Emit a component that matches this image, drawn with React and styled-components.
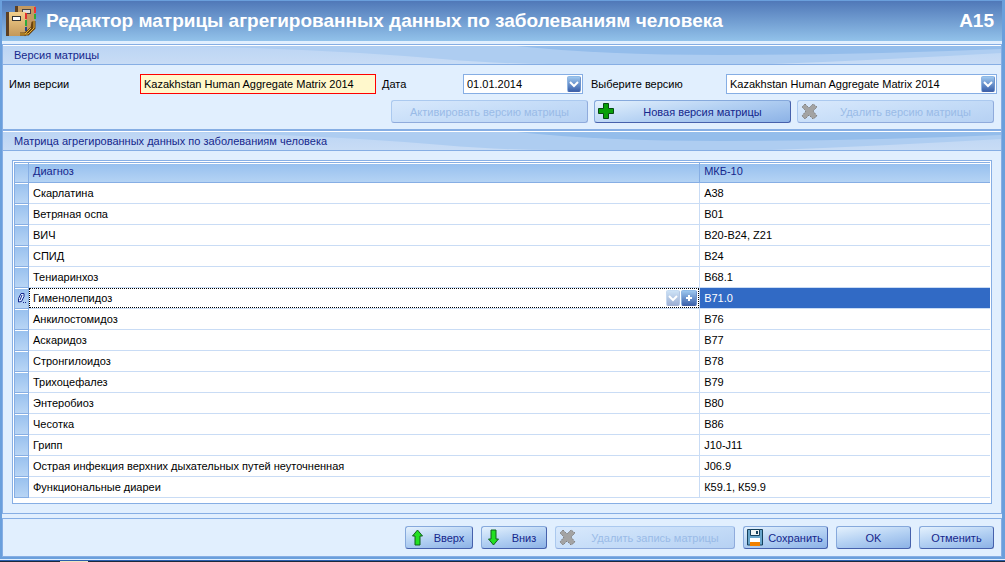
import React from 'react';
import styled, { createGlobalStyle, css } from 'styled-components';

const Global = createGlobalStyle`
  * { box-sizing: border-box; }
  body {
    margin: 0;
    background: #e1effe;
    font-family: "Liberation Sans", Arial, sans-serif;
    font-size: 11px;
    line-height: 14px;
    color: #000;
  }
  button, input, select { font: inherit; color: inherit; }
`;

const Screen = styled.div`
  min-height: 100vh;
  display: flex;
  flex-direction: column;
`;

const Window = styled.main`
  flex: 1;
  display: flex;
  flex-direction: column;
  background: #e1effe;
  border: 2px solid #6a9fdc;
  border-top-width: 1px;
  border-right-width: 3px;
`;

const Desktop = styled.div`
  height: 3px;
  padding-left: 60px;
  background: linear-gradient(#e1effe 1px, #2b5fae 1px 2px, #1c2a3c 2px);
`;

const DesktopItem = styled.div`
  width: 28px;
  height: 3px;
  border-bottom: 1px solid #ece4c0;
`;

const TitleBar = styled.header`
  height: 40px;
  flex: none;
  display: flex;
  align-items: center;
  gap: 10px;
  padding: 0 8px 0 4px;
  margin-bottom: 3px;
  background: linear-gradient(#5078b8, #92c2ea);
  color: #fff;
`;

const Title = styled.h1`
  margin: 0;
  flex: 1;
  font-size: 19px;
  line-height: 24px;
  font-weight: bold;
  white-space: nowrap;
`;

const FormCode = styled.span`
  font-size: 19px;
  line-height: 24px;
  font-weight: bold;
`;

const Group = styled.section`
  border: 1px solid #86aee4;
  flex: ${(p) => (p.$grow ? 1 : 'none')};
  display: flex;
  flex-direction: column;
`;

const GroupHeader = styled.div`
  position: relative;
  height: 20px;
  flex: none;
  border-top: 1px solid #fff;
  border-bottom: 1px solid #86aee4;
  background: linear-gradient(#bcd5f4, #c8dcf5);
`;

const Swoosh = styled.svg`
  position: absolute;
  inset: 0;
  width: 100%;
  height: 100%;
`;

const GroupTitle = styled.h2`
  position: relative;
  margin: 0;
  padding: 2px 11px;
  font-size: 11px;
  line-height: 14px;
  font-weight: normal;
  color: #15278c;
`;

const VersionForm = styled.div`
  padding: 9px 4px 6px 6px;
  display: flex;
  flex-direction: column;
  gap: 6px;
`;

const FieldRow = styled.div`
  display: grid;
  grid-template-columns: 131px minmax(0, 236fr) 6px 81px minmax(0, 120fr) 8px 135px minmax(0, 271fr);
  align-items: center;
`;

const FieldLabel = styled.label`
  grid-column: ${(p) => p.$column};
  white-space: nowrap;
`;

const Box = styled.div`
  display: flex;
  align-items: center;
  position: relative;
  height: 20px;
  border: 1px solid ${(p) => (p.$required ? '#f00' : '#86aee4')};
  background: ${(p) => (p.$required ? '#fff8cc' : '#fff')};
`;

const inputStyle = css`
  flex: 1;
  min-width: 0;
  width: 100%;
  height: 18px;
  margin: 0;
  padding: 0 3px;
  border: 0;
  background: none;
  outline: none;
`;

const TextInput = styled.input`
  ${inputStyle}
`;

const Picker = styled.select`
  ${inputStyle}
  appearance: none;
`;

const SquareButton = styled.button`
  width: ${(p) => p.$width || 14}px;
  height: 16px;
  flex: none;
  margin: 0 1px 0 0;
  padding: 0;
  border: 1px solid;
  border-color: #8fbbe8 #6d93cc #4463a8 #8fb4e2;
  border-radius: 2px;
  display: flex;
  align-items: center;
  justify-content: center;
  background: linear-gradient(#9cc6ee, #3c62ac);
  opacity: ${(p) => (p.disabled ? 0.5 : 1)};
`;

const PickerArrow = styled(SquareButton).attrs({ as: 'span' })`
  position: absolute;
  right: 0;
  pointer-events: none;
`;

const Actions = styled.div`
  display: flex;
  justify-content: flex-end;
  gap: 6px;
  padding-right: ${(p) => p.$inset || 0}px;
`;

const Button = styled.button`
  position: relative;
  width: ${(p) => p.$width}px;
  height: 23px;
  padding: 0 2px 0 ${(p) => p.$pad || 2}px;
  border: 1px solid;
  border-color: #86a9dc #4661ac #4661ac #86a9dc;
  border-radius: 3px;
  background: linear-gradient(170deg, #e4f1fd, #b4d1f3 50%, #8cb2e6);
  color: #15278c;
  white-space: nowrap;

  &:disabled {
    border-color: #abc9ef #8fabdc #8fabdc #abc9ef;
    background: linear-gradient(170deg, #d9e9fc, #c6ddf8 50%, #b6d1f3);
    color: #9abbe7;
  }
`;

const ButtonIcon = styled.svg`
  position: absolute;
  left: 3px;
  top: 2px;
  width: 17px;
  height: 17px;
`;

const MatrixBody = styled.div`
  padding: 9px;
  flex: 1;
  display: flex;
`;

const TableFrame = styled.div`
  flex: 1;
  border: 1px solid #86aee4;
  background: #fff;
  padding: 1px 1px 5px;
`;

const Table = styled.table`
  width: 100%;
  table-layout: fixed;
  border-collapse: separate;
  border-spacing: 0;
`;

const HeadCell = styled.th`
  height: 21px;
  padding: 0 4px 3px;
  text-align: left;
  font-weight: normal;
  color: #15278c;
  border: solid #86aee4;
  border-width: 1px 1px 1px 0;
  background: linear-gradient(#96bfee, #b4d3f4);
  box-shadow: inset 0 1px #fff;
  &:last-child { border-right: 0; }
`;

const RowMark = styled.th`
  height: 21px;
  padding: 0;
  border: solid #86aee4;
  border-width: 0 1px 1px;
  background: linear-gradient(#98c0ee, #b8d5f5);
  box-shadow: inset 0 1px #fff;
  thead & { border-top-width: 1px; }
`;

const MarkIcon = styled.svg`
  display: block;
  width: 11px;
  height: 14px;
  margin: 0 auto;
`;

const Cell = styled.td`
  height: 21px;
  padding: 0 4px;
  border-bottom: 1px solid #c9dcf5;
  border-right: ${(p) => (p.$last ? 0 : 1)}px solid #c9dcf5;
  white-space: nowrap;
  ${(p) => p.$selected && 'background: #316ac5; color: #fff;'}
  ${(p) => p.$editing && 'padding: 0;'}
`;

const Editor = styled.div`
  height: 20px;
  display: flex;
  align-items: center;
  border: 1px dotted #000;
`;

const Footer = styled.footer`
  display: flex;
  justify-content: flex-end;
  gap: 8px;
  margin-top: 4px;
  padding: 7px;
  border: 1px solid #86aee4;
`;

const rows = [
  ['Скарлатина', 'A38'],
  ['Ветряная оспа', 'B01'],
  ['ВИЧ', 'B20-B24, Z21'],
  ['СПИД', 'B24'],
  ['Тениаринхоз', 'B68.1'],
  ['Гименолепидоз', 'B71.0'],
  ['Анкилостомидоз', 'B76'],
  ['Аскаридоз', 'B77'],
  ['Стронгилоидоз', 'B78'],
  ['Трихоцефалез', 'B79'],
  ['Энтеробиоз', 'B80'],
  ['Чесотка', 'B86'],
  ['Грипп', 'J10-J11'],
  ['Острая инфекция верхних дыхательных путей неуточненная', 'J06.9'],
  ['Функциональные диареи', 'К59.1, К59.9'],
];
const EDITED = 5;

const Chevron = () => (
  <svg width="10" height="8" viewBox="0 0 10 8" fill="none" stroke="#fff" strokeWidth="2">
    <path d="M1 2l4 4 4-4" />
  </svg>
);

const BooksIcon = () => (
  <svg width="30" height="32" viewBox="0 0 30 32" aria-hidden="true">
    <defs>
      <linearGradient id="cover" x2="0" y2="1">
        <stop stopColor="#f2cf8c" />
        <stop offset="1" stopColor="#c4985a" />
      </linearGradient>
    </defs>
    <path d="M9 1h20v24H9z" fill="#c49a62" />
    <path d="M9 1h3v7H9z" fill="#5d4022" />
    <path d="M28 2h2v6h-2z" fill="#e33" />
    <path d="M28 9h2v5h-2z" fill="#3a3" />
    <rect x="16.500" y="4.500" width="8" height="4" fill="#ddd" stroke="#444" />
    <path d="M0 7h20v24H0z" fill="url(#cover)" />
    <path d="M0 7h3v24H0z" fill="#5d4022" />
    <path d="M19 8h2v6h-2z" fill="#e03030" />
    <path d="M19 15h2v6h-2z" fill="#2faa3c" />
    <path d="M19 22h2v4h-2z" fill="#26448c" />
    <rect x="6.500" y="11.500" width="8" height="4" fill="#fff" stroke="#333" />
    <path d="M14 29h8l6-6v-7M18 30l8-7 1-6" fill="none" stroke="#6b4310" strokeWidth="3" />
    <path d="M14 29h8l6-6v-7M19 29l6-6" fill="none" stroke="#e8b53a" strokeWidth="1" />
  </svg>
);

const PlusIcon = () => (
  <ButtonIcon viewBox="0 0 17 17" aria-hidden="true">
    <path d="M5.500.500h5v5h5v5h-5v5h-5v-5h-5v-5h5z" fill="#09a009" stroke="#064a12" />
  </ButtonIcon>
);
const CrossIcon = () => (
  <ButtonIcon viewBox="0 0 17 17" aria-hidden="true">
    <path
      d="M4 1l4 4 4-4 4 3-4 4 4 5-4 3-4-4-4 4-3-3 4-5-4-4z"
      fill="#a3a3a3"
      stroke="#808080"
      strokeDasharray="2 1"
    />
  </ButtonIcon>
);
const ArrowIcon = ({ down }) => (
  <ButtonIcon viewBox="0 0 17 17" aria-hidden="true">
    <path
      d="M8.500 1l5 6h-2.500v9h-5V7H3.500z"
      fill="#22e022"
      stroke="#11601c"
      transform={down ? 'rotate(180 8.500 8.500)' : undefined}
    />
  </ButtonIcon>
);
const DiskIcon = () => (
  <ButtonIcon viewBox="0 0 17 17" aria-hidden="true">
    <path d="M.5.500h15v15.500H.500z" fill="#68a6cc" stroke="#15405c" />
    <path d="M3.500.500h9v6h-9z" fill="#eef4f4" stroke="#15405c" />
    <path d="M9 2h2v3H9z" fill="#15405c" />
    <path d="M3 9h10v4H3z" fill="#fff" />
    <path d="M3 13h10v4H3z" fill="#f08000" />
  </ButtonIcon>
);

const SectionHeader = ({ children }) => (
  <GroupHeader>
    <Swoosh viewBox="0 0 1000 18" preserveAspectRatio="none" aria-hidden="true">
      <path d="M180 0Q320 3 440 13Q500 18 550 18H770Q880 14 1000 7V0z" fill="#aecdf1" />
      <path d="M515 0Q600 9 720 9Q860 9 1000 3V0z" fill="#94bdeb" />
    </Swoosh>
    <GroupTitle>{children}</GroupTitle>
  </GroupHeader>
);

export default function App() {
  return (
    <Screen>
      <Global />
      <Window>
        <TitleBar>
          <BooksIcon />
          <Title>Редактор матрицы агрегированных данных по заболеваниям человека</Title>
          <FormCode>A15</FormCode>
        </TitleBar>

        <Group>
          <SectionHeader>Версия матрицы</SectionHeader>
          <VersionForm>
            <FieldRow>
              <FieldLabel htmlFor="name" $column={1}>Имя версии</FieldLabel>
              <Box $required>
                <TextInput id="name" defaultValue="Kazakhstan Human Aggregate Matrix 2014" />
              </Box>
              <FieldLabel htmlFor="date" $column={4}>Дата</FieldLabel>
              <Box>
                <TextInput id="date" defaultValue="01.01.2014" />
                <SquareButton type="button" aria-label="Дата"><Chevron /></SquareButton>
              </Box>
              <FieldLabel htmlFor="version" $column={7}>Выберите версию</FieldLabel>
              <Box>
                <Picker id="version">
                  <option>Kazakhstan Human Aggregate Matrix 2014</option>
                </Picker>
                <PickerArrow><Chevron /></PickerArrow>
              </Box>
            </FieldRow>
            <Actions $inset={3}>
              <Button type="button" $width={197} disabled>Активировать версию матрицы</Button>
              <Button type="button" $width={197} $pad={22}><PlusIcon />Новая версия матрицы</Button>
              <Button type="button" $width={197} $pad={22} disabled><CrossIcon />Удалить версию матрицы</Button>
            </Actions>
          </VersionForm>
        </Group>

        <Group $grow>
          <SectionHeader>Матрица агрегированных данных по заболеваниям человека</SectionHeader>
          <MatrixBody>
            <TableFrame>
              <Table>
                <colgroup>
                  <col style={{ width: 15 }} />
                  <col />
                  <col style={{ width: '29.7%' }} />
                </colgroup>
                <thead>
                  <tr>
                    <RowMark />
                    <HeadCell scope="col">Диагноз</HeadCell>
                    <HeadCell scope="col">МКБ-10</HeadCell>
                  </tr>
                </thead>
                <tbody>
                  {rows.map(([name, code], i) => (
                    <tr key={name}>
                      <RowMark scope="row">
                        {i === EDITED && (
                          <MarkIcon viewBox="0 0 11 14" fill="none" stroke="#15278c">
                            <path d="M2.500 11V7.500l2.500-5h3v3l-2.500 5zM6 4l-2 5" fill="#e1effe" />
                            <path d="M7 11.500h1M9 11.500h1" />
                          </MarkIcon>
                        )}
                      </RowMark>
                      {i === EDITED ? (
                        <Cell $editing>
                          <Editor>
                            <TextInput aria-label="Диагноз" defaultValue={name} />
                            <SquareButton type="button" disabled aria-label="Список"><Chevron /></SquareButton>
                            <SquareButton type="button" $width={16} aria-label="Добавить">
                              <svg width="8" height="8" viewBox="0 0 8 8" stroke="#fff" strokeWidth="2">
                                <path d="M4 1v6M1 4h6" />
                              </svg>
                            </SquareButton>
                          </Editor>
                        </Cell>
                      ) : (
                        <Cell>{name}</Cell>
                      )}
                      <Cell $last $selected={i === EDITED}>{code}</Cell>
                    </tr>
                  ))}
                </tbody>
              </Table>
            </TableFrame>
          </MatrixBody>
        </Group>

        <Footer>
          <Button type="button" $width={68} $pad={22}><ArrowIcon />Вверх</Button>
          <Button type="button" $width={66} $pad={22}><ArrowIcon down />Вниз</Button>
          <Button type="button" $width={180} $pad={22} disabled><CrossIcon />Удалить запись матрицы</Button>
          <Button type="button" $width={85} $pad={22}><DiskIcon />Сохранить</Button>
          <Button type="button" $width={75}>OK</Button>
          <Button type="button" $width={75}>Отменить</Button>
        </Footer>
      </Window>
      <Desktop><DesktopItem /></Desktop>
    </Screen>
  );
}
